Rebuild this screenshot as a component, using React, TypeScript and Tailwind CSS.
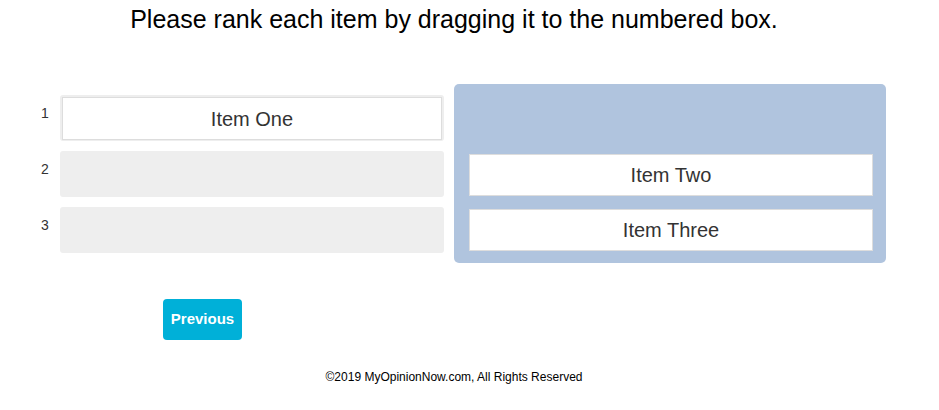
import React from "react";

const ranked = ["Item One", null, null];
const pool = ["Item Two", "Item Three"];

const ItemCard = ({ label, h }: { label: string; h: string }) => (
  <div
    className={`flex items-center justify-center border border-[#dddddd] bg-white text-[20px] text-[#333333] ${h}`}
  >
    {label}
  </div>
);

const App = () => {
  return (
    <div className="min-h-[410px] w-[908px] bg-white font-['Liberation_Sans',Arial,sans-serif] text-black">
      <h1 className="pt-[5px] text-center text-[25px] leading-[29px]">
        Please rank each item by dragging it to the numbered box.
      </h1>

      <div className="mt-[50px] flex items-start pl-[30px]">
        {/* numbered slots */}
        <div className="flex flex-col gap-[10px] pt-[11px]">
          {ranked.map((item, i) => (
            <div key={i} className="flex items-start">
              <span className="w-[30px] pt-[8px] text-center text-[14px] leading-[20px] text-[#333333]">
                {i + 1}
              </span>
              <div className="h-[46px] w-[384px] rounded-[3px] bg-[#eeeeee] p-[2px]">
                {item && <ItemCard label={item} h="h-[43px]" />}
              </div>
            </div>
          ))}
        </div>

        {/* source pool */}
        <div className="ml-[10px] flex w-[432px] flex-col gap-[13px] rounded-[5px] bg-[#b0c4de] pb-[12px] pl-[15px] pr-[13px] pt-[70px]">
          {pool.map((item) => (
            <ItemCard key={item} label={item} h="h-[42px]" />
          ))}
        </div>
      </div>

      <div className="mt-[36px] pl-[163px]">
        <button
          type="button"
          className="h-[41px] w-[79px] rounded-[4px] bg-[#00b0d8] text-[15px] font-bold text-white"
        >
          Previous
        </button>
      </div>

      <p className="mt-[30px] text-center text-[12px] leading-[14px] text-black">
        ©2019 MyOpinionNow.com, All Rights Reserved
      </p>
    </div>
  );
};

export default App;
